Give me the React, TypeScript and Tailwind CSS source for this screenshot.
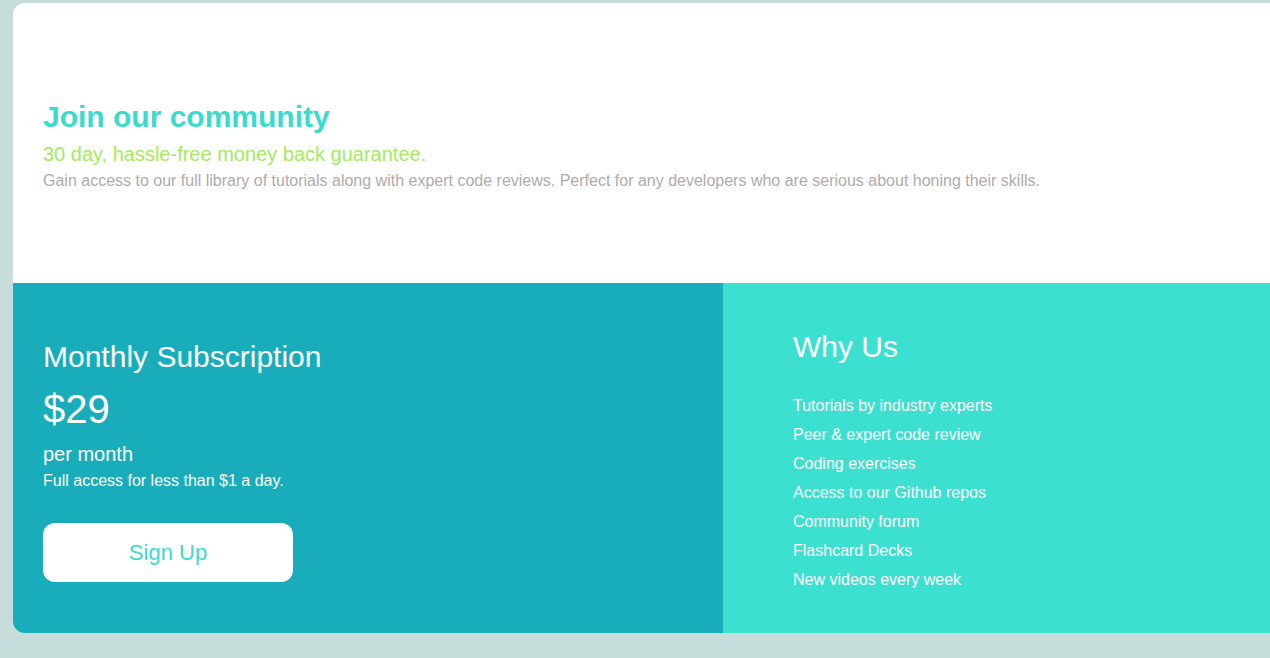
export default function App() {
  const items = [
    "Tutorials by industry experts",
    "Peer & expert code review",
    "Coding exercises",
    "Access to our Github repos",
    "Community forum",
    "Flashcard Decks",
    "New videos every week",
  ];
  return (
    <div className="w-[1270px] h-[658px] overflow-hidden bg-[#c7dddb] pt-[3px] pl-[13px]" style={{ fontFamily: '"Liberation Sans", Arial, sans-serif' }}>
      <div className="w-[1420px] rounded-[12px] overflow-hidden">
        <div className="bg-white h-[280px] px-[30px] pt-[96px]">
          <h1 className="text-[30px] font-bold text-[#3adbcf] leading-[36px]">Join our community</h1>
          <p className="text-[20px] text-[#a4ea5e] leading-[24px] mt-[7px]">30 day, hassle-free money back guarantee.</p>
          <p className="text-[16px] text-[#b0aaaa] leading-[20px] mt-[5px]">Gain access to our full library of tutorials along with expert code reviews. Perfect for any developers who are serious about honing their skills.</p>
        </div>
        <div className="grid grid-cols-2 h-[350px]">
          <div className="bg-[#19adbb] px-[30px] pt-[56px] text-white">
            <h2 className="text-[30px] leading-[36px]">Monthly Subscription</h2>
            <div className="text-[40px] leading-[46px] mt-[11px]">$29</div>
            <div className="text-[20px] leading-[24px] mt-[10px]">per month</div>
            <div className="text-[16px] leading-[20px] mt-[5px]">Full access for less than $1 a day.</div>
            <button className="mt-[32px] w-[250px] h-[59px] rounded-[12px] bg-white text-[#3adbcf] text-[22px]">Sign Up</button>
          </div>
          <div className="bg-[#3ce0d0] pl-[70px] pt-[46px] text-white">
            <h2 className="text-[30px] leading-[36px]">Why Us</h2>
            <ul className="mt-[26px] flex flex-col">
              {items.map((t) => (
                <li key={t} className="text-[16px] leading-[29px]">{t}</li>
              ))}
            </ul>
          </div>
        </div>
      </div>
    </div>
  );
}
